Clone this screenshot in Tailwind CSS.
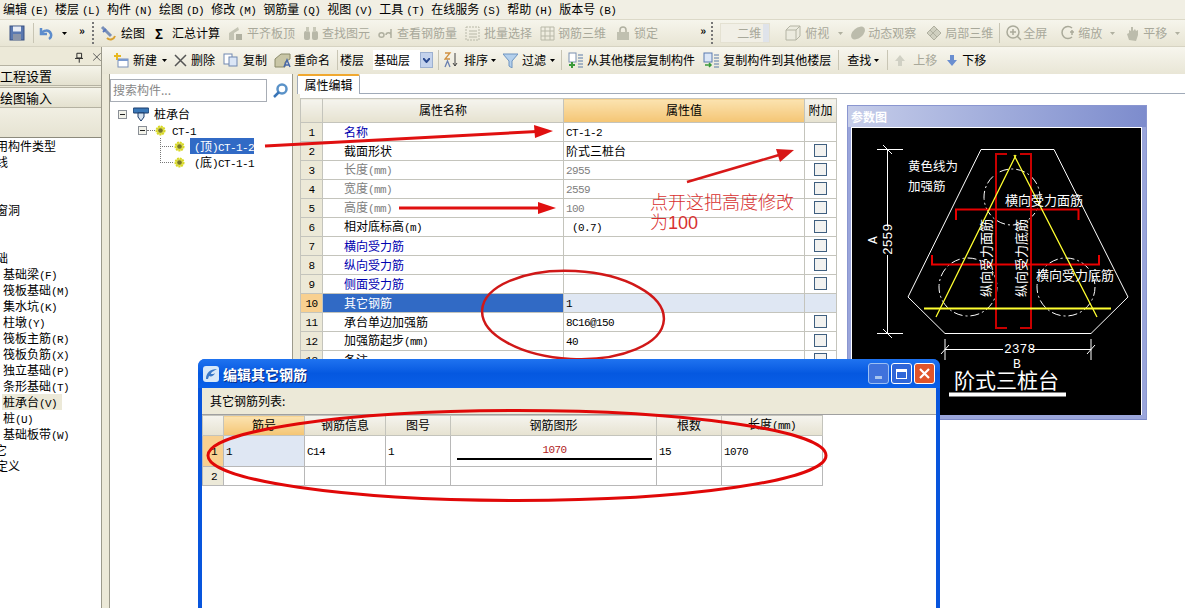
<!DOCTYPE html>
<html lang="zh-CN">
<head>
    <meta charset="UTF-8">
    <title>钢筋算量</title>
    <script src="https://cdn.jsdelivr.net/npm/@tailwindcss/browser@4"></script>
</head>
<body class="relative w-[1185px] h-[608px] overflow-hidden bg-[#ece9d8] font-['Noto_Sans_CJK_SC',sans-serif] text-xs leading-none text-black [&_i]:not-italic [&_i]:font-['Liberation_Mono',monospace] [&_i]:text-[11px] [&_i]:leading-none [&_i]:tracking-[-0.6px]">

    <!-- shared icons -->
    <svg class="hidden">
        <symbol id="caret" viewBox="0 0 5 3"><path d="M0 0h5L2.500 3z"/></symbol>
        <symbol id="gear" viewBox="0 0 12 12"><circle cx="6" cy="6" r="4.500" fill="#dede50" stroke="#d8d820" stroke-width="2" stroke-dasharray="2 1"/><circle cx="6" cy="6" r="2.500" fill="#77772a"/></symbol>
        <symbol id="box" viewBox="0 0 9 9"><rect x=".5" y=".5" width="8" height="8" fill="#f2f2ea" stroke="#8a8f96"/><path d="M2 4.500h5" stroke="#222"/></symbol>
        <symbol id="grip" viewBox="0 0 2 24"><path d="M1 1v22" stroke="#777" stroke-dasharray="2 2" stroke-width="2"/></symbol>
    </svg>

    <!-- menu -->
    <nav class="flex items-center gap-[7px] h-[20px] pl-[3px] bg-[#f1efe4] border-b border-[#dcd9c8] [&_i]:ml-[3px]">
        <span>编辑<i>(E)</i></span><span>楼层<i>(L)</i></span><span>构件<i>(N)</i></span><span>绘图<i>(D)</i></span><span>修改<i>(M)</i></span><span>钢筋量<i>(Q)</i></span><span>视图<i>(V)</i></span><span>工具<i>(T)</i></span><span>在线服务<i>(S)</i></span><span>帮助<i>(H)</i></span><span>版本号<i>(B)</i></span>
    </nav>

    <!-- main toolbar -->
    <div class="flex items-center h-[27px] whitespace-nowrap bg-linear-to-b from-[#f6f5ec] to-[#e8e5d4] border-b border-[#d6d3c2] text-[#a8a89a]">
        <svg class="ml-[9px] w-[16px] h-[16px]" viewBox="0 0 16 16"><rect x="1" y="1" width="14" height="14" fill="#5a78b0" stroke="#3a5080"/><rect x="4" y="1.500" width="8" height="5" fill="#e8ecf4"/><rect x="4" y="9" width="8" height="6" fill="#8a94a8"/></svg>
        <span class="ml-[8px] w-px h-[20px] bg-[#c8c5b4]"></span>
        <svg class="ml-[4px] w-[15px] h-[15px]" viewBox="0 0 15 15" fill="none"><path d="M3 2v6h6M3 8c2-4 8-5 10 0 .5 2-.5 4-2 5" stroke="#5c8ccc" stroke-width="2.500"/></svg>
        <svg class="ml-[9px] w-[5px] h-[3px] fill-black"><use href="#caret"/></svg>
        <span class="ml-[12px] w-[9px] text-black font-bold text-[11px] -mt-[6px]">»</span>
        <svg class="ml-[4px] w-[2px] h-[24px]"><use href="#grip"/></svg>
        <svg class="ml-[6px] w-[16px] h-[18px]" viewBox="0 0 16 18" fill="none"><path d="M2 3l9 9" stroke="#7a90b8" stroke-width="3"/><path d="M7 14c3 3 7 1 8-2" stroke="#d8a030" stroke-width="2"/><path d="M3 8l3-3" stroke="#5878c0" stroke-width="2"/></svg>
        <span class="ml-[5px] text-black">绘图</span>
        <span class="ml-[10px] w-[10px] text-black font-bold text-[13px]">Σ</span>
        <span class="ml-[7px] text-black">汇总计算</span>
        <svg class="ml-[8px] w-[15px] h-[15px]" viewBox="0 0 15 15"><path d="M1 14V7l9-6 1 3-5 3v7z" fill="#c4c4b4"/><rect x="8" y="8" width="6" height="6" fill="#b0b0a0"/></svg>
        <span class="ml-[4px]">平齐板顶</span>
        <svg class="ml-[8px] w-[16px] h-[15px]" viewBox="0 0 16 15"><rect x="1" y="5" width="6" height="9" rx="2" fill="#b8b8a8"/><rect x="9" y="5" width="6" height="9" rx="2" fill="#b8b8a8"/><rect x="3" y="1" width="3" height="5" fill="#c8c8b8"/><rect x="10" y="1" width="3" height="5" fill="#c8c8b8"/></svg>
        <span class="ml-[3px]">查找图元</span>
        <svg class="ml-[8px] w-[15px] h-[15px]" viewBox="0 0 15 15" fill="none"><path d="M1 9c0-3 5-3 5 0s-5 3-5 0zM8 9c0-3 5-3 5 0M13 3v9" stroke="#b0b0a0" stroke-width="1.500"/></svg>
        <span class="ml-[4px]">查看钢筋量</span>
        <svg class="ml-[8px] w-[15px] h-[15px]" viewBox="0 0 15 15" fill="none" stroke="#b8b8a8"><rect x="1" y="1" width="13" height="13" stroke-dasharray="2 1"/><path d="M4 5h8M4 8h8M4 11h8"/></svg>
        <span class="ml-[4px]">批量选择</span>
        <svg class="ml-[8px] w-[15px] h-[15px]" viewBox="0 0 15 15" fill="none" stroke="#b8b8a8"><path d="M1 1h13v13H1zM5 1v13M10 1v13M1 5h13M1 10h13"/></svg>
        <span class="ml-[3px]">钢筋三维</span>
        <svg class="ml-[10px] w-[14px] h-[15px]" viewBox="0 0 14 15"><rect x="1" y="6" width="12" height="8" fill="#c0c0b0"/><path d="M4 6V4a3 3 0 0 1 6 0v2" fill="none" stroke="#b0b0a0" stroke-width="1.500"/></svg>
        <span class="ml-[4px]">锁定</span>
        <span class="ml-[42px] w-[9px] text-black font-bold text-[11px] -mt-[6px]">»</span>
        <svg class="ml-[2px] w-[2px] h-[24px]"><use href="#grip"/></svg>
        <span class="ml-[7px] flex items-center w-[50px] h-[20px] bg-[#f1efe6] border border-[#e4e1d2] pl-[16px]">二维<span class="ml-[2px] flex-1 h-full bg-[#dfe3ea]"></span></span>
        <svg class="ml-[15px] w-[16px] h-[16px]" viewBox="0 0 16 16" fill="#ecebdf" stroke="#b4b4a4"><path d="M1 5l4-4h10v10l-4 4H1zM1 5h10v10M11 5l4-4"/></svg>
        <span class="ml-[4px]">俯视</span>
        <svg class="ml-[9px] w-[5px] h-[3px] fill-[#b0b0a0]"><use href="#caret"/></svg>
        <svg class="ml-[7px] w-[17px] h-[16px]" viewBox="0 0 17 16"><ellipse cx="8" cy="8" rx="8" ry="5" transform="rotate(-40 8 8)" fill="#bcbcac"/></svg>
        <span class="ml-[1px]">动态观察</span>
        <svg class="ml-[9px] w-[18px] h-[16px]" viewBox="0 0 18 16" fill="#d0d0c0" stroke="#b0b0a0"><path d="M9 1l7 7-7 7-7-7z"/><path d="M5 5l7 7M12 4l-7 7"/></svg>
        <span class="ml-[2px]">局部三维</span>
        <span class="ml-[6px] w-px h-[20px] bg-[#c8c5b4]"></span>
        <svg class="ml-[6px] w-[16px] h-[16px]" viewBox="0 0 16 16" fill="none" stroke="#aaaa9a" stroke-width="1.500"><circle cx="7" cy="7" r="6"/><path d="M11 11l4 4M7 4v6M4 7h6"/></svg>
        <span class="ml-[1px]">全屏</span>
        <svg class="ml-[13px] w-[16px] h-[16px]" viewBox="0 0 16 16" fill="none" stroke="#aaaa9a" stroke-width="1.500"><path d="M12 3a6 6 0 1 0 0 9M12 5v5M10 7h4"/></svg>
        <span class="ml-[2px]">缩放</span>
        <svg class="ml-[8px] w-[5px] h-[3px] fill-[#b0b0a0]"><use href="#caret"/></svg>
        <svg class="ml-[10px] w-[16px] h-[16px]" viewBox="0 0 16 16"><path d="M4 15l-2-6 2-1V5l2 1V2h2v4l2-2 1 2 2-1v5l-2 6z" fill="#bcbcac"/></svg>
        <span class="ml-[2px]">平移</span>
        <svg class="ml-[8px] w-[5px] h-[3px] fill-[#b0b0a0]"><use href="#caret"/></svg>
    </div>

    <div class="flex h-[561px]">
        <!-- left navigation -->
        <aside class="flex flex-col w-[102px] pt-[2px] border-r border-[#9c9a8c] overflow-hidden">
            <div class="flex items-center h-[16px] pl-[75px] text-[#333]">
                <svg class="w-[9px] h-[11px]" viewBox="0 0 9 11" fill="none" stroke="#222"><path d="M2 1h5v5H2zM0 6.500h9M4.500 7v4"/></svg>
                <svg class="ml-[10px] w-[8px] h-[8px]" viewBox="0 0 8 8" stroke="#555"><path d="M0 0l8 8M8 0L0 8"/></svg>
            </div>
            <div class="flex items-center h-[21px] mb-px bg-linear-to-b from-[#f5f4ea] to-[#e4e1cf] border-y border-[#b5b2a2] text-[13px]"><span>工程设置</span></div>
            <div class="flex items-center h-[21px] bg-linear-to-b from-[#f5f4ea] to-[#e4e1cf] border-y border-[#b5b2a2] text-[13px]"><span>绘图输入</span></div>
            <div class="h-[30px] shrink-0 bg-linear-to-b from-[#f1efe3] to-[#e6e3d2] border-b border-[#8c8a7c]"></div>
            <ul class="flex-1 bg-white leading-[16px] whitespace-nowrap">
                <li class="-ml-[16px]">常用构件类型</li>
                <li class="-ml-[16px]">轴线</li>
                <li class="h-[32px]"></li>
                <li class="-ml-[16px]">门窗洞</li>
                <li class="h-[32px]"></li>
                <li class="-ml-[16px]">基础</li>
                <li class="pl-[3px]">基础梁<i>(F)</i></li>
                <li class="pl-[3px]">筏板基础<i>(M)</i></li>
                <li class="pl-[3px]">集水坑<i>(K)</i></li>
                <li class="pl-[3px]">柱墩<i>(Y)</i></li>
                <li class="pl-[3px]">筏板主筋<i>(R)</i></li>
                <li class="pl-[3px]">筏板负筋<i>(X)</i></li>
                <li class="pl-[3px]">独立基础<i>(P)</i></li>
                <li class="pl-[3px]">条形基础<i>(T)</i></li>
                <li class="pl-[3px] ml-[2px] -indent-[2px] w-[60px] bg-[#ece9d8]">桩承台<i>(V)</i></li>
                <li class="pl-[3px]">桩<i>(U)</i></li>
                <li class="pl-[3px]">基础板带<i>(W)</i></li>
                <li class="-ml-[17px]">其它</li>
                <li class="-ml-[16px]">自定义</li>
            </ul>
        </aside>

        <div class="flex flex-col flex-1">
            <!-- list toolbar -->
            <div class="flex items-center h-[27px] pb-px shrink-0 whitespace-nowrap bg-linear-to-b from-[#f7f6ee] to-[#e9e6d6]">
                <svg class="ml-[11px] w-[16px] h-[16px]" viewBox="0 0 16 16"><rect x="5" y="7" width="10" height="8" fill="#fff" stroke="#7a90b8"/><rect x="5" y="7" width="10" height="2" fill="#7a9ad0"/><path d="M4 1v7M1 4h7" stroke="#e8b820" stroke-width="2"/></svg>
                <span class="ml-[4px]">新建</span>
                <svg class="ml-[5px] w-[5px] h-[3px] fill-black"><use href="#caret"/></svg>
                <svg class="ml-[7px] w-[13px] h-[13px]" viewBox="0 0 13 13" stroke="#555" stroke-width="1.500"><path d="M1 1l11 11M12 1L1 12"/></svg>
                <span class="ml-[4px]">删除</span>
                <svg class="ml-[8px] w-[15px] h-[14px]" viewBox="0 0 15 14" fill="#fff" stroke="#7088b0"><rect x="1" y="1" width="8" height="10"/><rect x="6" y="4" width="8" height="9" fill="#dbe6f6"/></svg>
                <span class="ml-[5px]">复制</span>
                <svg class="ml-[7px] w-[17px] h-[17px]" viewBox="0 0 17 17"><path d="M1 15V7l6-5h9v5l-5 3v5z" fill="#c9c6a6" stroke="#8a8a6a"/><path d="M10 15l3-7 3 7M11 13h4" fill="none" stroke="#4868a8" stroke-width="1.500"/></svg>
                <span class="ml-[3px]">重命名</span>
                <span class="ml-[7px] w-px h-[20px] bg-[#c8c5b4]"></span>
                <span class="ml-[2px]">楼层</span>
                <span class="ml-[9px] flex items-center w-[47px] h-[20px] bg-white pl-px">基础层</span>
                <span class="flex items-center justify-center w-[13px] h-[16px] bg-[#c3d2ec] border border-[#9cb0d0]"><svg class="w-[7px] h-[5px]" viewBox="0 0 7 5" fill="none" stroke="#2a4a90" stroke-width="2"><path d="M0 0l3.500 4L7 0"/></svg></span>
                <span class="ml-[5px] w-px h-[20px] bg-[#c8c5b4]"></span>
                <svg class="ml-[5px] w-[14px] h-[16px]" viewBox="0 0 14 16" fill="none"><path d="M1 1h5L1 7h5" stroke="#d09040" stroke-width="1.300"/><path d="M1 15l2.500-6L6 15" stroke="#6a80b0" stroke-width="1.300"/><path d="M11 1v13M9 11l2 3 2-3" stroke="#444"/></svg>
                <span class="ml-[6px]">排序</span>
                <svg class="ml-[3px] w-[5px] h-[3px] fill-black"><use href="#caret"/></svg>
                <svg class="ml-[7px] w-[15px] h-[15px]" viewBox="0 0 15 15"><path d="M0 1h15L9 8v7l-3-2V8z" fill="#b4d0ec" stroke="#6e94c0"/></svg>
                <span class="ml-[4px]">过滤</span>
                <svg class="ml-[4px] w-[5px] h-[3px] fill-black"><use href="#caret"/></svg>
                <span class="ml-[6px] w-px h-[20px] bg-[#c8c5b4]"></span>
                <svg class="ml-[6px] w-[15px] h-[17px]" viewBox="0 0 15 17"><rect x="1" y="1" width="7" height="9" fill="#fff" stroke="#7a90b0"/><path d="M10 3h5M10 6h5M10 9h5M10 12h5M10 15h5" stroke="#5a7aa8"/><path d="M4 10v6M1 13h6" stroke="#3a9a3a" stroke-width="2"/></svg>
                <span class="ml-[4px]">从其他楼层复制构件</span>
                <svg class="ml-[8px] w-[17px] h-[17px]" viewBox="0 0 17 17"><rect x="1" y="1" width="8" height="9" fill="#dbe6f6" stroke="#5a7ab0"/><path d="M11 3h5M11 6h5M11 9h5M11 12h5M11 15h5" stroke="#5a7aa8"/><path d="M2 13h6M6 11l2 2-2 2" stroke="#3a9a3a" stroke-width="1.500" fill="none"/></svg>
                <span class="ml-[3px]">复制构件到其他楼层</span>
                <span class="ml-[7px] w-px h-[20px] bg-[#c8c5b4]"></span>
                <span class="ml-[8px]">查找</span>
                <svg class="ml-[3px] w-[5px] h-[3px] fill-black"><use href="#caret"/></svg>
                <span class="ml-[8px] w-px h-[20px] bg-[#c8c5b4]"></span>
                <svg class="ml-[7px] w-[10px] h-[11px]" viewBox="0 0 10 11"><path d="M5 0l5 6H7v5H3V6H0z" fill="#d0d0c4"/></svg>
                <span class="ml-[8px] text-[#a8a89a]">上移</span>
                <svg class="ml-[10px] w-[10px] h-[11px]" viewBox="0 0 10 11"><path d="M5 11L0 5h3V0h4v5h3z" fill="#6a8ed0"/></svg>
                <span class="ml-[5px]">下移</span>
            </div>

            <div class="flex flex-1 min-h-0">
                <!-- component tree -->
                <section class="w-[184px] ml-[7px] shrink-0 bg-white border-x border-[#9c9a8c]">
                    <div class="flex items-center h-[32px] pt-[5px] pb-[4px]">
                        <span class="flex items-center w-[157px] h-[23px] pl-[2px] pb-px border border-[#a8adb5] text-[#888]">搜索构件...</span>
                        <svg class="ml-[6px] w-[15px] h-[15px]" viewBox="0 0 15 15" fill="none"><circle cx="9" cy="6" r="4.500" stroke="#5a92c8" stroke-width="2.500"/><path d="M6 9l-5 5" stroke="#3a76b8" stroke-width="2.500"/></svg>
                    </div>
                    <div class="leading-[16px] whitespace-nowrap">
                        <div class="flex items-center h-[16px] pl-[8px]">
                            <svg class="w-[9px] h-[9px]"><use href="#box"/></svg>
                            <svg class="ml-[6px] w-[16px] h-[15px]" viewBox="0 0 16 15"><rect x="0" y="1" width="16" height="5" rx="1" fill="#3a78b8" stroke="#1a3a68"/><path d="M5 6h6v4l-3 4-3-4z" fill="#d8e4f0" stroke="#1a3a68"/></svg>
                            <span class="ml-[5px]">桩承台</span>
                        </div>
                        <div class="flex items-center h-[16px] pl-[28px]">
                            <svg class="w-[9px] h-[9px]"><use href="#box"/></svg>
                            <span class="w-[8px] border-t border-dotted border-[#777]"></span>
                            <svg class="w-[11px] h-[11px]"><use href="#gear"/></svg>
                            <span class="ml-[6px]"><i>CT-1</i></span>
                        </div>
                        <div class="flex items-center h-[16px] pl-[50px]">
                            <svg class="w-[13px] h-[16px]" viewBox="0 0 13 16" fill="none" stroke="#777" stroke-dasharray="1 1"><path d="M.5 0v16M0 8.500h13"/></svg>
                            <svg class="ml-px w-[11px] h-[11px]"><use href="#gear"/></svg>
                            <span class="ml-[5px] px-[4px] h-[16px] w-[64px] bg-[#316ac5] text-white"><i>(</i>顶<i>)CT-1-2</i></span>
                        </div>
                        <div class="flex items-center h-[16px] pl-[50px]">
                            <svg class="w-[13px] h-[16px]" viewBox="0 0 13 16" fill="none" stroke="#777" stroke-dasharray="1 1"><path d="M.5 0v8.500M0 8.500h13"/></svg>
                            <svg class="ml-px w-[11px] h-[11px]"><use href="#gear"/></svg>
                            <span class="ml-[9px]"><i>(</i>底<i>)CT-1-1</i></span>
                        </div>
                    </div>
                </section>

                <!-- properties -->
                <section class="flex flex-col ml-[4px] flex-1 bg-white">
                    <div class="flex h-[20px] shrink-0 border-b border-[#a0aab8]">
                        <span class="flex items-center justify-center w-[63px] h-[20px] pb-px border-x border-t-2 border-x-[#a0aab8] border-t-[#f0a830] bg-white rounded-t-[2px]">属性编辑</span>
                    </div>
                    <div class="flex flex-1 pt-[4px] border-l-[3px] border-[#ece9d8]">
                        <table class="table-fixed border-collapse w-[536px] h-fit shrink-0 self-start [&_td]:h-[19px] [&_td]:p-0 [&_td]:pb-px [&_td]:border [&_td]:border-[#c4c4bc] [&_th]:pb-px [&_th]:border [&_th]:border-[#c4c4bc] [&_th]:font-normal">
                            <colgroup><col class="w-[22px]"><col class="w-[241px]"><col class="w-[241px]"><col class="w-[32px]"></colgroup>
                            <thead>
                                <tr class="h-[24px]">
                                    <th class="bg-linear-to-b from-[#f5f4ee] to-[#e6e2d0]"></th>
                                    <th class="bg-linear-to-b from-[#f5f4ee] to-[#e6e2d0]">属性名称</th>
                                    <th class="bg-linear-to-b from-[#fbe3b0] to-[#f4c573]">属性值</th>
                                    <th class="bg-linear-to-b from-[#f5f4ee] to-[#e6e2d0]">附加</th>
                                </tr>
                            </thead>
                            <tbody id="props"></tbody>
                        </table>

                        <!-- parameter drawing -->
                        <div class="ml-[10px] mt-[7px] flex flex-col w-[300px] h-[315px] bg-[#9aa5da] border border-[#8a96d0] border-b-[#7c8ac8] self-start">
                            <div class="flex items-center h-[21px] pl-[3px] bg-linear-to-r from-[#c6cde9] to-[#7d8ccd] text-white font-bold">参数图</div>
                            <svg class="ml-[3px] w-[291px] h-[288px] bg-black border-t border-x border-white" viewBox="852 128 289 287" fill="none" font-family="'Noto Sans CJK SC',sans-serif">
                                <g stroke="#fff">
                                    <path d="M981 149.500h73l74 147.500-37 36.500H945l-37-36.500z"/>
                                    <path d="M877 149.500h26M877 333.500h26M887.500 149.500v77M887.500 255v78.500M945 349.500h58M1031 349.500h60M945 339v21M1091 339v21M883 145l9 9M883 329l9 9M941 354l8-9M1087 354l8-9"/>
                                    <path d="M949 394.500h117" stroke-width="4"/>
                                </g>
                                <g stroke="#fff" stroke-dasharray="9 3 2 3">
                                    <circle cx="1012" cy="197" r="28"/><circle cx="968" cy="287" r="29"/><circle cx="1066" cy="287" r="29"/>
                                </g>
                                <g stroke="#c80000" stroke-width="2">
                                    <path d="M1007 154h-11v174h11M1020 154h11v174h-11"/>
                                </g>
                                <g stroke="#e80000" stroke-width="2">
                                    <path d="M956 220v-10.500h122.500V220M932 255v9.500h167V255"/>
                                </g>
                                <g stroke="#ffff30">
                                    <path d="M1016 155l-80 162M1014 155l83 162" stroke-width="1.300"/>
                                    <path d="M924 308.500h187" stroke-width="2"/>
                                </g>
                                <g fill="#fff" font-size="13">
                                    <text x="908" y="171" font-size="12.500">黄色线为</text>
                                    <text x="908" y="191" font-size="12.500">加强筋</text>
                                    <text x="1005" y="205">横向受力面筋</text>
                                    <text x="1036" y="280">横向受力底筋</text>
                                    <text transform="translate(991 297) rotate(-90)">纵向受力面筋</text>
                                    <text transform="translate(1026 297) rotate(-90)">纵向受力底筋</text>
                                    <text transform="translate(892 255) rotate(-90)" font-family="'Liberation Mono',monospace">2559</text>
                                    <text transform="translate(877 244) rotate(-90)" font-family="'Liberation Mono',monospace">A</text>
                                    <text x="1004" y="353" font-family="'Liberation Mono',monospace">2378</text>
                                    <text x="1013" y="368" font-family="'Liberation Mono',monospace">B</text>
                                    <text x="954" y="388" font-size="21">阶式三桩台</text>
                                </g>
                            </svg>
                        </div>
                    </div>
                </section>
            </div>
        </div>
    </div>

    <!-- hand-drawn notes on the properties grid -->
    <svg class="absolute left-0 top-0 w-[1185px] h-[608px] pointer-events-none" viewBox="0 0 1185 608" fill="none">
        <ellipse cx="573" cy="315" rx="91" ry="44" transform="rotate(3 573 315)" stroke="#d01818" stroke-width="2.500"/>
        <path d="M265 146l272-14.500" stroke="#e01010" stroke-width="3"/>
        <path d="M553 131l-18 7-1-13z" fill="#e01010"/>
        <path d="M399 208h142" stroke="#e01010" stroke-width="3"/>
        <path d="M556 208l-18 6v-12z" fill="#e01010"/>
        <path d="M687 182l92-27" stroke="#d81818" stroke-width="2.500"/>
        <path d="M794 150l-14 12-4-13z" fill="#d81818"/>
    </svg>
    <p class="absolute left-[650px] top-[191px] w-[146px] text-[18px] leading-[20px] font-light text-[#d83030]">点开这把高度修改为<span class="font-['Liberation_Sans',sans-serif]">100</span></p>

    <!-- edit dialog -->
    <div class="absolute left-[198px] top-[359px] w-[742px] h-[260px] flex flex-col rounded-t-[7px] bg-[#0855dd] px-[4px]">
        <div class="flex items-center h-[29px] -mx-[4px] px-[5px] rounded-t-[7px] bg-linear-to-b from-[#1f73f0] via-[#0558e0] to-[#0a5fe8]">
            <svg class="w-[16px] h-[16px]" viewBox="0 0 16 16"><rect width="16" height="16" rx="3" fill="#d8e8f8"/><path d="M3 13C3 7 7 3 14 3c-3 2-6 3-6 5 2 0 3 0 4-1-1 3-4 4-6 3l-1 3z" fill="#3a78c8"/></svg>
            <span class="ml-[4px] text-[14px] font-bold text-white [text-shadow:1px_1px_#0a2a80]">编辑其它钢筋</span>
            <span class="ml-auto flex gap-[2px]">
                <span class="flex items-end justify-center w-[21px] h-[21px] pb-[4px] rounded-[3px] bg-[#3f72dc] border border-[#9cc0f4]"><span class="w-[7px] h-[3px] bg-[#a8c4ee]"></span></span>
                <span class="flex items-center justify-center w-[21px] h-[21px] rounded-[3px] bg-[#2f66d8] border border-white"><span class="w-[11px] h-[10px] border border-t-[3px] border-white"></span></span>
                <span class="flex items-center justify-center w-[21px] h-[21px] rounded-[3px] bg-[#e0552a] border border-white"><svg class="w-[11px] h-[11px]" viewBox="0 0 11 11" stroke="#fff" stroke-width="2.200"><path d="M1 1l9 9M10 1l-9 9"/></svg></span>
            </span>
        </div>
        <div class="flex-1 bg-white">
            <div class="flex items-center h-[27px] pl-[8px] bg-[#ece9d8] border-b border-[#a0a0a0]">其它钢筋列表:</div>
            <table class="table-fixed border-collapse w-[621px] [&_td]:p-0 [&_td]:pl-[2px] [&_td]:border [&_td]:border-[#b8b8b8] [&_th]:pb-px [&_th]:border [&_th]:border-[#c4c4bc] [&_th]:font-normal">
                <colgroup><col class="w-[21px]"><col class="w-[81px]"><col class="w-[81px]"><col class="w-[65px]"><col class="w-[206px]"><col class="w-[65px]"><col class="w-[101px]"></colgroup>
                <thead>
                    <tr class="h-[20px] bg-linear-to-b from-[#f5f4ee] to-[#e6e2d0]">
                        <th></th>
                        <th class="bg-linear-to-b from-[#fbe3b0] to-[#f4c573]">筋号</th>
                        <th>钢筋信息</th>
                        <th>图号</th>
                        <th>钢筋图形</th>
                        <th>根数</th>
                        <th>长度<i>(mm)</i></th>
                    </tr>
                </thead>
                <tbody>
                    <tr class="h-[31px]">
                        <td class="bg-[#f8d090] text-center"><i>1</i></td>
                        <td class="bg-[#dfe7f3]"><i>1</i></td>
                        <td><i>C14</i></td>
                        <td><i>1</i></td>
                        <td>
                            <div class="flex flex-col items-center">
                                <i class="text-[#b02020] pt-[2px]">1070</i>
                                <span class="block mt-[2px] w-[195px] h-[2px] bg-black"></span>
                            </div>
                        </td>
                        <td><i>15</i></td>
                        <td><i>1070</i></td>
                    </tr>
                    <tr class="h-[19px]">
                        <td class="bg-[#ece9d8] text-center"><i>2</i></td>
                        <td></td><td></td><td></td><td></td><td></td><td></td>
                    </tr>
                </tbody>
            </table>
        </div>
    </div>

    <!-- red circle over the rebar list -->
    <svg class="absolute left-0 top-0 w-[1185px] h-[608px] pointer-events-none" viewBox="0 0 1185 608" fill="none">
        <ellipse cx="517" cy="455.500" rx="309" ry="45" stroke="#e00808" stroke-width="3"/>
    </svg>

    <script>
        // property rows: [name, value, name colour, value colour, has checkbox]
        const rows = [
            ['名称', '<i>CT-1-2</i>', 'text-[#0000b0]', '', false],
            ['截面形状', '阶式三桩台', '', '', true],
            ['长度<i>(mm)</i>', '<i>2955</i>', 'text-[#808080]', 'text-[#808080]', true],
            ['宽度<i>(mm)</i>', '<i>2559</i>', 'text-[#808080]', 'text-[#808080]', true],
            ['高度<i>(mm)</i>', '<i>100</i>', 'text-[#808080]', 'text-[#808080]', true],
            ['相对底标高<i>(m)</i>', '<i> (0.7)</i>', '', '', true],
            ['横向受力筋', '', 'text-[#0000b0]', '', true],
            ['纵向受力筋', '', 'text-[#0000b0]', '', true],
            ['侧面受力筋', '', 'text-[#0000b0]', '', true],
            ['其它钢筋', '<i>1</i>', 'bg-[#316ac5] text-white', 'bg-[#dfe7f3]', false],
            ['承台单边加强筋', '<i>8C16@150</i>', '', '', true],
            ['加强筋起步<i>(mm)</i>', '<i>40</i>', '', '', true],
            ['备注', '', '', '', true]
        ];

        document.getElementById('props').innerHTML = rows.map((r, i) => {
            const selected = i === 9;
            const box = r[4] ? '<span class="block mx-auto w-[13px] h-[13px] border border-[#3f5f7f] bg-[#f2f2f0]"></span>' : '';
            return `<tr>
                <td class="text-center ${selected ? 'bg-[#f8d090]' : 'bg-[#ece9d8]'}"><i>${i + 1}</i></td>
                <td class="pl-[21px]! ${r[2]}">${r[0]}</td>
                <td class="pl-[2px]! whitespace-pre ${r[3]}">${r[1]}</td>
                <td class="${selected ? 'bg-[#dfe7f3]' : ''}">${box}</td>
            </tr>`;
        }).join('');
    </script>
</body>
</html>
